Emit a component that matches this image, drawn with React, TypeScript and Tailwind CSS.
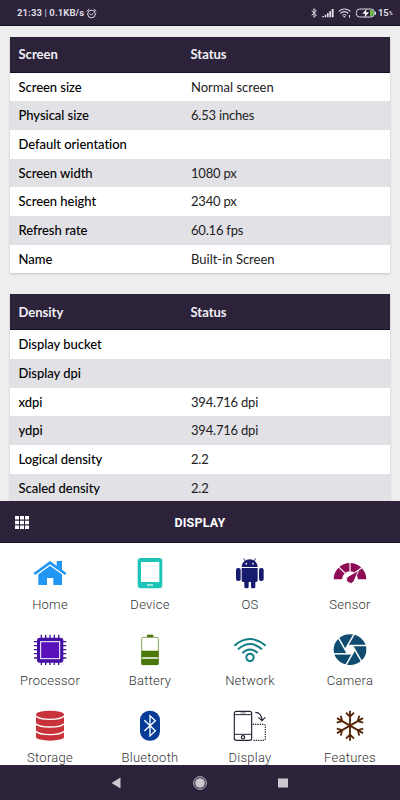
import React from 'react';
import clsx from 'clsx';

interface Row {
  label: string;
  value?: string;
}

interface InfoTableProps {
  title: string;
  rows: Row[];
}

const screenRows: Row[] = [
  { label: 'Screen size', value: 'Normal screen' },
  { label: 'Physical size', value: '6.53 inches' },
  { label: 'Default orientation' },
  { label: 'Screen width', value: '1080 px' },
  { label: 'Screen height', value: '2340 px' },
  { label: 'Refresh rate', value: '60.16 fps' },
  { label: 'Name', value: 'Built-in Screen' },
];

const densityRows: Row[] = [
  { label: 'Display bucket' },
  { label: 'Display dpi' },
  { label: 'xdpi', value: '394.716 dpi' },
  { label: 'ydpi', value: '394.716 dpi' },
  { label: 'Logical density', value: '2.2' },
  { label: 'Scaled density', value: '2.2' },
];

function InfoTable({ title, rows }: InfoTableProps) {
  return (
    <div className="shrink-0 bg-white shadow-[0_1px_2px_rgba(0,0,0,0.2)] text-[13px]">
      <div className="flex h-[36px] items-center border-b border-[#171027] bg-[#2c233b] pl-[8.500px] pt-[2px] font-bold text-[#f1eff4]">
        <span className="w-[172px]">{title}</span>
        <span>Status</span>
      </div>
      {rows.map((row) => (
        <div key={row.label} className="flex h-[28.7px] items-center pl-[8.500px] pt-[1px] text-[#111] even:bg-white odd:bg-[#e1e1e6]">
          <span className="w-[172.500px] font-medium tracking-[-0.04px] text-black">{row.label}</span>
          <span className={clsx('text-[#222]', /^\d/.test(row.value ?? '') && 'tracking-[-0.2px]')}>{row.value}</span>
        </div>
      ))}
    </div>
  );
}

function StatusBar() {
  return (
    <div className="flex h-[26px] shrink-0 items-center border-b border-[#171027] bg-[#2c233b] pl-[17px] pr-[8px] pt-[1px] font-['Roboto',sans-serif] text-[9.5px] font-bold text-[#dedbe3]">
      <span className="whitespace-pre tracking-[0.1px]">21:33<span className="font-normal"> | </span>0.1KB/s</span>
      <svg className="ml-[2px] h-[11px] w-[11px]" viewBox="0 0 33 33" fill="none" stroke="currentColor" strokeWidth="3">
        <circle cx="16.500" cy="18" r="11.500" />
        <path d="M2 10 L10 3 M31 10 L23 3 M11 16 L16 21 L22 16" />
      </svg>
      <svg className="ml-auto mr-[1.500px] h-[12px] w-[67px]" viewBox="0 0 201 36">
        <g fill="none" stroke="#dedbe3" strokeWidth="3">
          <path d="M5 11 L19 24 L12 31 V5 L19 12 L5 25" />
          <path d="M86 13 Q103 -1 121 13" strokeWidth="3.500" />
          <path d="M91 19 Q103 9 115 19" strokeWidth="3.500" />
          <path d="M97 25 Q103 20 109 25" />
          <rect x="139" y="6" width="54" height="24" rx="10" />
        </g>
        <path fill="#dedbe3" d="M37 27h5v4h-5z M44 23h5v8h-5z M51 18h5v13h-5z M58 12h5v19h-5z M65 6h6v25h-6z M99 27h8l-4 5z M117 24h3v8h-3z M194 14h4v9h-4z" />
        <path fill="#6cbb45" d="M180 9h4a8 9 0 0 1 0 18h-4z" />
        <path fill="#fff" d="M170 5l-13 15h9l-3 12 14-16h-9z" />
      </svg>
      <span className="w-[11px] tracking-[-0.2px]">15</span>
      <span className="-mr-[0.500px] mt-[2px] w-[3.500px] text-[5px]">%</span>
    </div>
  );
}

function HomeIcon() {
  return (
    <g fill="#2196f3">
      <path d="M51 29l36 26v32H61V66H42v21H16V55z" />
      <path d="M4 54L51 20l47 34" fill="none" stroke="#fff" strokeWidth="14" />
      <path d="M71 15h16v28l-16-12z" />
      <path d="M4 54L51 20l47 34" fill="none" stroke="#2196f3" strokeWidth="8" />
    </g>
  );
}

function DeviceIcon() {
  return (
    <g>
      <rect x="14" y="6" width="74" height="91" rx="10" fill="#1cc5b5" />
      <rect x="24" y="18" width="55" height="60" fill="#fff" />
      <path d="M42 87h18" stroke="#fff" strokeWidth="3.500" />
    </g>
  );
}

function AndroidIcon() {
  return (
    <g fill="#171c6c">
      <path d="M26 33a24 23 0 0 1 48 0z" />
      <path d="M32 7l6 10M68 7l-6 10" stroke="#171c6c" strokeWidth="2.500" />
      <circle cx="40" cy="23" r="2.500" fill="#fff" />
      <circle cx="60" cy="23" r="2.500" fill="#fff" />
      <path d="M26 36h48v37q0 5-5 5H31q-5 0-5-5z" />
      <rect x="9" y="36" width="14" height="39" rx="6" />
      <rect x="78" y="36" width="14" height="39" rx="6" />
      <rect x="34" y="70" width="13" height="27" rx="5" />
      <rect x="54" y="70" width="13" height="27" rx="5" />
    </g>
  );
}

function GaugeIcon() {
  return (
    <g>
      <path d="M2 70a49 49 0 0 1 98 0H75a24 24 0 0 0-48 0z" fill="#8e0b56" />
      <path d="M51 18v29M15 31l21 20M89 33L66 50" stroke="#fff" strokeWidth="3.500" />
      <path d="M77 43L63 76a12 12 0 1 1-21-13z" fill="#8e0b56" stroke="#fff" strokeWidth="3" />
    </g>
  );
}

function ProcessorIcon() {
  return (
    <g>
      <path
        d="M25 5v91M38 5v91M51 5v91M64 5v91M77 5v91M3 26h97M3 38h97M3 50h97M3 62h97M3 75h97"
        stroke="#3d1292"
        strokeWidth="4"
      />
      <rect x="12" y="14" width="79" height="75" rx="8" fill="#4612a3" />
      <rect x="23" y="26" width="57" height="51" fill="#5912b9" stroke="#fff" strokeWidth="3" />
    </g>
  );
}

function BatteryIcon() {
  return (
    <g fill="#4b7608">
      <path d="M42 5h19v8H42z" />
      <rect x="26" y="13" width="50" height="82" rx="4" fill="#fff" stroke="#6d9138" strokeWidth="2.500" />
      <path d="M25 53h52v20H25zM25 77h52v16q0 3-3 3H28q-3 0-3-3z" />
    </g>
  );
}

function NetworkIcon() {
  return (
    <g fill="none" stroke="#0f7c86" strokeWidth="6">
      <path d="M4 38Q51-2 98 38" />
      <path d="M15 49Q51 17 87 49" />
      <path d="M28 60Q51 39 74 60" />
      <circle cx="51" cy="73" r="11" />
    </g>
  );
}

function CameraIcon() {
  return (
    <g>
      <ellipse cx="51" cy="50" rx="49" ry="46" fill="#0f4c70" />
      <circle cx="51" cy="50" r="13" fill="#fff" />
      {[0, 60, 120, 180, 240, 300].map((angle) => (
        <path key={angle} d="M43 37.500H103" stroke="#fff" strokeWidth="4.500" transform={`rotate(${angle} 51 50)`} />
      ))}
    </g>
  );
}

function StorageIcon() {
  return (
    <g>
      <path d="M9 17a42 12 0 0 1 84 0v67a42 11 0 0 1-84 0z" fill="#c8323a" />
      <path d="M8 21q10 10 43 10t43-10M8 44q10 10 43 10t43-10M8 67q10 10 43 10t43-10" fill="none" stroke="#fff" strokeWidth="4" />
    </g>
  );
}

function BluetoothIcon() {
  return (
    <g>
      <rect x="21" y="5" width="60" height="90" rx="28" fill="#073b98" />
      <path d="M34 34l33 31-16 16V20l16 15-33 31" fill="none" stroke="#fff" strokeWidth="4" />
    </g>
  );
}

function DisplayIcon() {
  return (
    <g fill="none" stroke="#272535" strokeWidth="3.500">
      <rect x="4" y="7" width="52" height="87" rx="6" />
      <path d="M4 17h52M4 76h52" strokeWidth="3" />
      <path d="M23 12h15" strokeWidth="2" />
      <circle cx="30" cy="85" r="5" />
      <path d="M59 46h33q5 0 5 5v38q0 5-5 5H59" strokeDasharray="4 3" />
      <path d="M67 10q18 0 20 24M76 25l11 10 10-10" />
    </g>
  );
}

function FeaturesIcon() {
  return (
    <g fill="none" stroke="#572508" strokeWidth="5.500">
      {[0, 60, 120, 180, 240, 300].map((angle) => (
        <path key={angle} d="M51 50V5M39 11l12 12 12-12" transform={`rotate(${angle} 51 50)`} />
      ))}
    </g>
  );
}

const menuItems = [
  { label: 'Home', Icon: HomeIcon },
  { label: 'Device', Icon: DeviceIcon },
  { label: 'OS', Icon: AndroidIcon },
  { label: 'Sensor', Icon: GaugeIcon },
  { label: 'Processor', Icon: ProcessorIcon },
  { label: 'Battery', Icon: BatteryIcon },
  { label: 'Network', Icon: NetworkIcon },
  { label: 'Camera', Icon: CameraIcon },
  { label: 'Storage', Icon: StorageIcon },
  { label: 'Bluetooth', Icon: BluetoothIcon },
  { label: 'Display', Icon: DisplayIcon },
  { label: 'Features', Icon: FeaturesIcon },
];

export default function App() {
  return (
    <div className="flex h-[800px] w-[400px] flex-col overflow-hidden bg-[#eeeeee] font-['Lato',sans-serif]">
      <StatusBar />

      <div className="flex h-[475px] shrink-0 flex-col gap-[21px] overflow-hidden px-[10px] pt-[10.500px]">
        <InfoTable title="Screen" rows={screenRows} />
        <InfoTable title="Density" rows={densityRows} />
      </div>

      <div className="grid h-[42px] shrink-0 grid-cols-3 items-center border-b border-[#171027] bg-[#2c233b] px-[15px] pt-[1px] text-white">
        <svg className="h-[13px] w-[14px]" viewBox="0 0 14 13" fill="currentColor">
          <path d="M0 0h4v3.500H0zM5 0h4v3.500H5zM10 0h4v3.500h-4zM0 4.700h4v3.500H0zM5 4.700h4v3.500H5zM10 4.700h4v3.500h-4zM0 9.400h4v3.500H0zM5 9.400h4v3.500H5zM10 9.400h4v3.500h-4z" />
        </svg>
        <span className="pt-[2px] text-center font-['Roboto',sans-serif] text-[12.500px] font-bold tracking-[0.2px]">DISPLAY</span>
      </div>

      <div className="grid h-[222px] shrink-0 grid-cols-4 auto-rows-[76.400px] overflow-hidden bg-white pt-[13px]">
        {menuItems.map(({ label, Icon }) => (
          <div key={label} className="flex flex-col items-center">
            <svg className="mt-[0.300px] h-[34px] w-[34px] shrink-0" viewBox="0 0 102 102">
              <Icon />
            </svg>
            <span className="mt-[5.700px] font-['Roboto',sans-serif] text-[13px] font-light leading-[17px] tracking-[0.25px] text-[#333]">{label}</span>
          </div>
        ))}
      </div>

      <div className="flex h-[35px] shrink-0 items-center justify-center bg-[#2c233b] text-[#cbc8d0]">
        <svg className="h-[16px] w-[180px]" viewBox="0 0 180 16" fill="currentColor">
          <path d="M1.500 8L10.500 2.500V13.500z" />
          <circle cx="90" cy="8" r="4.800" />
          <circle cx="90" cy="8" r="6.300" fill="none" stroke="currentColor" />
          <path d="M168 3.500h10v9h-10z" />
        </svg>
      </div>
    </div>
  );
}
